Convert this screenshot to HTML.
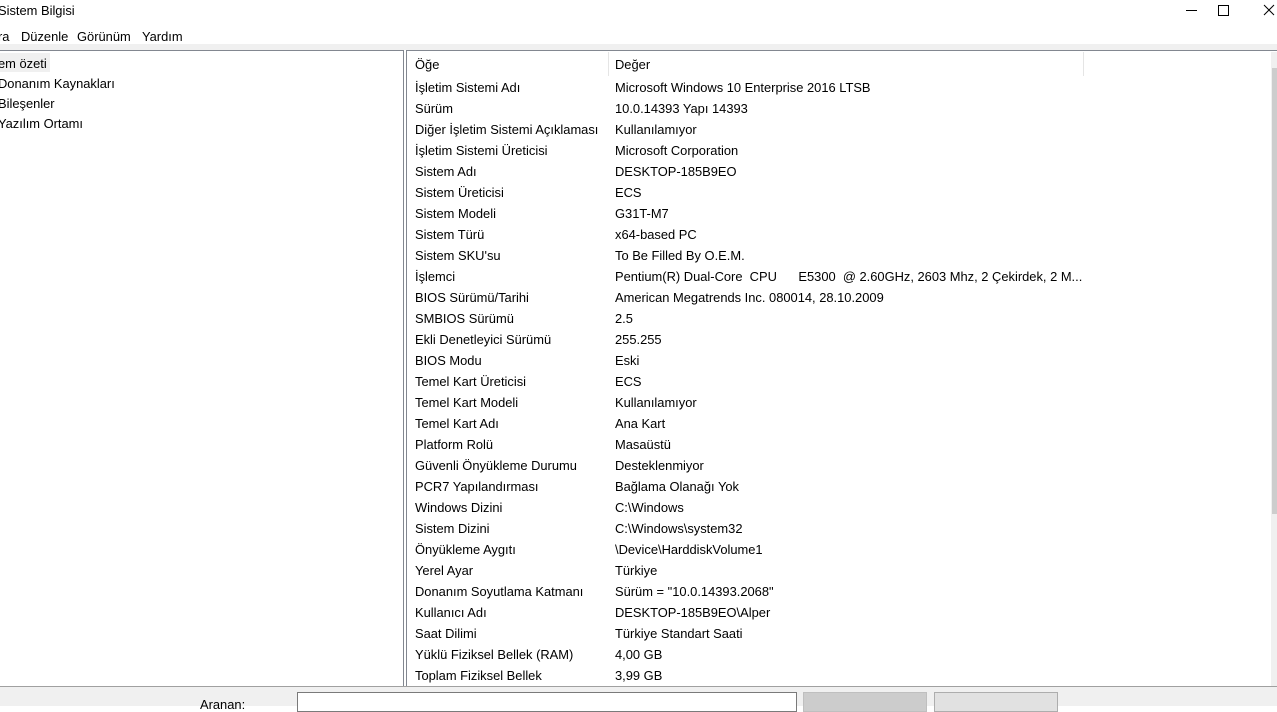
<!DOCTYPE html>
<html><head><meta charset="utf-8"><style>
body{margin:0;width:1277px;height:705px;overflow:hidden;background:#fff;font-family:"Liberation Sans",sans-serif;font-size:12.9px;color:#000;position:relative}
.a{position:absolute;white-space:nowrap}
</style></head><body>
<div class="a" style="left:-2px;top:3px">Sistem Bilgisi</div>
<div class="a" style="left:1186px;top:10px;width:11px;height:1px;background:#000"></div>
<div class="a" style="left:1218px;top:5px;width:9px;height:9px;border:1px solid #000"></div>
<svg class="a" style="left:1263px;top:4px" width="12" height="12"><path d="M1 1L11 11M11 1L1 11" stroke="#000" stroke-width="1"/></svg>
<div class="a" style="left:-2px;top:29px">ra</div>
<div class="a" style="left:21px;top:29px">Düzenle</div>
<div class="a" style="left:77px;top:29px">Görünüm</div>
<div class="a" style="left:142px;top:29px">Yardım</div>
<div class="a" style="left:0;top:44px;width:1277px;height:6px;background:#f0f0f0"></div>
<div class="a" style="left:0;top:50px;width:404px;height:636px;border-top:1px solid #828790;border-right:1px solid #828790;box-sizing:border-box"></div>
<div class="a" style="left:406px;top:50px;width:871px;height:636px;border-top:1px solid #828790;border-left:1px solid #828790;box-sizing:border-box"></div>
<div class="a" style="left:0;top:686px;width:1277px;height:19px;background:#f0f0f0;border-top:1px solid #a0a0a0"></div>
<div class="a" style="left:0;top:53px;width:50px;height:19px;background:#f0f0f0"></div>
<div class="a" style="left:-2px;top:56px">em özeti</div>
<div class="a" style="left:-2px;top:76px">Donanım Kaynakları</div>
<div class="a" style="left:-2px;top:96px">Bileşenler</div>
<div class="a" style="left:-2px;top:116px">Yazılım Ortamı</div>
<div class="a" style="left:1271px;top:52px;width:6px;height:634px;background:#f0f0f0"></div>
<div class="a" style="left:1272px;top:68px;width:5px;height:446px;background:#cdcdcd"></div>
<div class="a" style="left:608px;top:52px;width:1px;height:24px;background:#e5e5e5"></div>
<div class="a" style="left:1083px;top:52px;width:1px;height:24px;background:#e5e5e5"></div>
<div class="a" style="left:415px;top:57px">Öğe</div>
<div class="a" style="left:615px;top:57px">Değer</div>
<div id="rows"></div>
<div class="a" style="left:200px;top:697px">Aranan:</div>
<div class="a" style="left:297px;top:692px;width:500px;height:20px;border:1px solid #7a7a7a;background:#fff;box-sizing:border-box"></div>
<div class="a" style="left:803px;top:692px;width:124px;height:20px;border:1px solid #bfbfbf;background:#cccccc;box-sizing:border-box"></div>
<div class="a" style="left:934px;top:692px;width:124px;height:20px;border:1px solid #adadad;background:#e1e1e1;box-sizing:border-box"></div>
<script>
var d=[["İşletim Sistemi Adı","Microsoft Windows 10 Enterprise 2016 LTSB"],["Sürüm","10.0.14393 Yapı 14393"],["Diğer İşletim Sistemi Açıklaması","Kullanılamıyor"],["İşletim Sistemi Üreticisi","Microsoft Corporation"],["Sistem Adı","DESKTOP-185B9EO"],["Sistem Üreticisi","ECS"],["Sistem Modeli","G31T-M7"],["Sistem Türü","x64-based PC"],["Sistem SKU'su","To Be Filled By O.E.M."],["İşlemci","Pentium(R) Dual-Core  CPU      E5300  @ 2.60GHz, 2603 Mhz, 2 Çekirdek, 2 M..."],["BIOS Sürümü/Tarihi","American Megatrends Inc. 080014, 28.10.2009"],["SMBIOS Sürümü","2.5"],["Ekli Denetleyici Sürümü","255.255"],["BIOS Modu","Eski"],["Temel Kart Üreticisi","ECS"],["Temel Kart Modeli","Kullanılamıyor"],["Temel Kart Adı","Ana Kart"],["Platform Rolü","Masaüstü"],["Güvenli Önyükleme Durumu","Desteklenmiyor"],["PCR7 Yapılandırması","Bağlama Olanağı Yok"],["Windows Dizini","C:\\Windows"],["Sistem Dizini","C:\\Windows\\system32"],["Önyükleme Aygıtı","\\Device\\HarddiskVolume1"],["Yerel Ayar","Türkiye"],["Donanım Soyutlama Katmanı","Sürüm = \"10.0.14393.2068\""],["Kullanıcı Adı","DESKTOP-185B9EO\\Alper"],["Saat Dilimi","Türkiye Standart Saati"],["Yüklü Fiziksel Bellek (RAM)","4,00 GB"],["Toplam Fiziksel Bellek","3,99 GB"]];
var h="";d.forEach(function(r,i){var t=80+i*21;h+='<div class="a" style="left:415px;top:'+t+'px">'+r[0]+'</div><div class="a" style="left:615px;top:'+t+'px;white-space:pre">'+r[1].replace(/</g,"&lt;")+'</div>';});
document.getElementById("rows").innerHTML=h;
</script>
</body></html>
